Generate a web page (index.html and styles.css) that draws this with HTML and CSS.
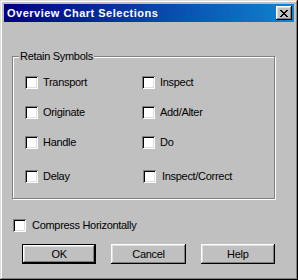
FILE: index.html
```html
<!DOCTYPE html>
<html lang="en">
<head>
    <meta charset="UTF-8">
    <meta name="viewport" content="width=device-width, initial-scale=1.0">
    <title>Overview Chart Selections</title>

    <link rel="stylesheet" href="styles.css">
</head>
<body>

    <div class="window">
        <!-- Title bar -->
        <div class="titlebar">
            <span class="title">Overview Chart Selections</span>
            <button class="close-btn" aria-label="Close">
                <svg width="8" height="7" viewBox="0 0 8 7">
                    <path d="M0 0h2v1h1v1h2V1h1V0h2v1H7v1H6v1H5v1h1v1h1v1h1v1H6V6H5V5H3v1H2v1H0V6h1V5h1V4h1V3H2V2H1V1H0z" fill="#000"/>
                </svg>
            </button>
        </div>

        <div class="dialog-body">
            <!-- Retain Symbols group -->
            <div class="group">
                <span class="group-label">Retain Symbols</span>
                <div class="check-grid">
                    <label class="check"><input type="checkbox"> Transport</label>
                    <label class="check"><input type="checkbox"> Inspect</label>
                    <label class="check"><input type="checkbox"> Originate</label>
                    <label class="check"><input type="checkbox"> Add/Alter</label>
                    <label class="check"><input type="checkbox"> Handle</label>
                    <label class="check"><input type="checkbox"> Do</label>
                    <label class="check"><input type="checkbox"> Delay</label>
                    <label class="check check-wide"><input type="checkbox"> Inspect/Correct</label>
                </div>
            </div>

            <label class="check compress"><input type="checkbox"> Compress Horizontally</label>

            <!-- Dialog buttons -->
            <div class="button-row">
                <button class="btn btn-default">OK</button>
                <button class="btn">Cancel</button>
                <button class="btn">Help</button>
            </div>
        </div>
    </div>

</body>
</html>
```

FILE: styles.css
```css
/* Page */
body {
    margin: 0;
    padding: 0;
    font-family: 'Liberation Sans', Arial, sans-serif;
    font-size: 11px;
    letter-spacing: -0.3px;
    color: #000;
    background: #c0c0c0;
}

/* Dialog window with raised bevel */
.window {
    width: 298px;
    height: 280px;
    box-sizing: border-box;
    padding: 4px;
    background: #c0c0c0;
    box-shadow: inset -1px -1px #000, inset 1px 1px #dfdfdf,
                inset -2px -2px #808080, inset 2px 2px #fff;
}

/* Title bar */
.titlebar {
    height: 18px;
    display: flex;
    align-items: center;
    justify-content: space-between;
    padding: 0 2px 0 3px;
    background: linear-gradient(90deg, #000080, #1084d0);
}

.title {
    color: #fff;
    font-weight: bold;
    font-size: 11px;
    letter-spacing: 0.5px;
}

.close-btn {
    width: 16px;
    height: 14px;
    padding: 0;
    border: none;
    background: #c0c0c0;
    display: flex;
    align-items: center;
    justify-content: center;
    box-shadow: inset -1px -1px #000, inset 1px 1px #fff,
                inset -2px -2px #808080, inset 2px 2px #dfdfdf;
}

/* Body area */
.dialog-body {
    padding: 34px 19px 0 8px;
}

/* Etched group box */
.group {
    position: relative;
    height: 143px;
    box-sizing: border-box;
    border: 1px solid #808080;
    box-shadow: inset 1px 1px #fff, 1px 1px #fff;
}

.group-label {
    position: absolute;
    top: -7px;
    left: 6px;
    padding: 0 1px;
    line-height: 13px;
    background: #c0c0c0;
}

.check-grid {
    display: grid;
    grid-template-columns: 117px 1fr;
    grid-template-rows: 30px 30px 34px 13px;
    padding: 19px 0 0 12px;
}

/* Checkbox + label */
.check {
    display: flex;
    align-items: center;
    height: 13px;
    line-height: 13px;
    white-space: nowrap;
}

.check input {
    appearance: none;
    -webkit-appearance: none;
    flex: none;
    width: 13px;
    height: 13px;
    margin: 0 5px 0 0;
    background: #fff;
    box-shadow: inset 1px 1px #808080, inset -1px -1px #fff,
                inset 2px 2px #000, inset -2px -2px #dfdfdf;
}

.check-wide {
    margin-left: 1px;
}

.check-wide input {
    margin-right: 6px;
}

.compress {
    margin: 20px 0 0 1px;
}

.compress input {
    margin-right: 6px;
}

/* Buttons */
.button-row {
    display: flex;
    gap: 15px;
    margin: 12px 0 0 10px;
}

.btn {
    width: 75px;
    height: 20px;
    padding: 0;
    border: none;
    font-family: 'Liberation Sans', Arial, sans-serif;
    font-size: 11px;
    letter-spacing: -0.3px;
    color: #000;
    background: #c0c0c0;
    box-shadow: inset -1px -1px #000, inset 1px 1px #fff,
                inset -2px -2px #808080, inset 2px 2px #dfdfdf;
}

.btn-default {
    box-shadow: inset 0 0 0 1px #000, inset -2px -2px #000, inset 2px 2px #fff,
                inset -3px -3px #808080, inset 3px 3px #dfdfdf;
}
```
